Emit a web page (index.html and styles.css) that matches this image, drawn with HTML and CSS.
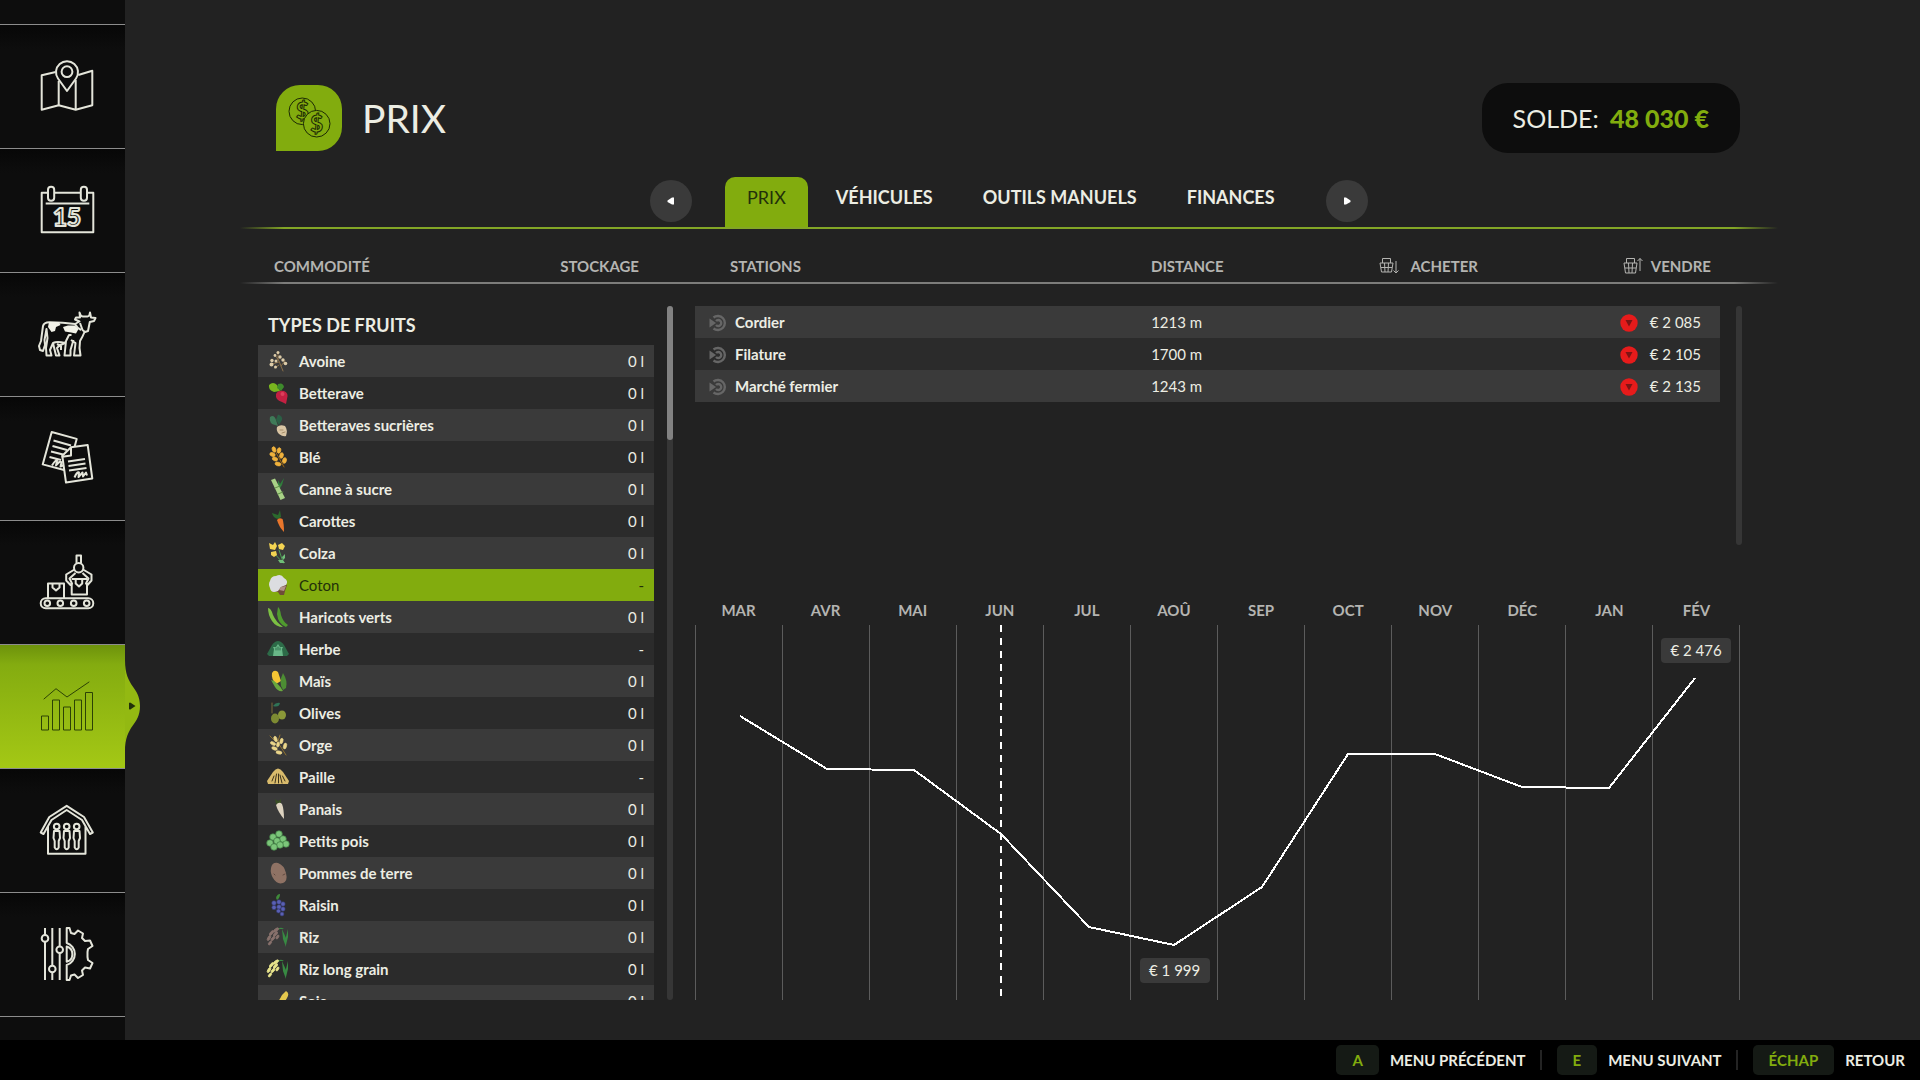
FILE: index.html
```html
<!DOCTYPE html>
<html lang="fr">
<head>
<meta charset="utf-8">
<title>Prix</title>
<link rel="stylesheet" href="styles.css">
</head>
<body>
<div class="app">
  <nav class="sidebar">
    <a class="side-item" href="#carte" aria-label="Carte"><svg class="side-icon" viewBox="0 0 60 60"><path d="M18.700 16L4.700 19.300V53.700L21.700 49.200L38.700 53.700L55.300 49.200V14.800L41.300 19"/><path d="M21.700 25V49.200M38.700 24V53.700"/><path class="solid" d="M30 35L21 22.500A11 11 0 1 1 39 22.500Z"/><circle cx="30" cy="15.700" r="5.400"/></svg></a>
    <a class="side-item" href="#calendrier" aria-label="Calendrier"><svg class="side-icon" viewBox="0 0 60 60"><path d="M4.700 12.700H56.300V52.300H4.700ZM8.700 23.400H52.300"/><rect class="solid" x="11" y="6.800" width="6.200" height="14" rx="3"/><rect class="solid" x="43.800" y="6.800" width="6.200" height="14" rx="3"/><text class="solid side-num" x="30" y="45.500" text-anchor="middle">15</text></svg></a>
    <a class="side-item" href="#animaux" aria-label="Animaux"><svg class="side-icon" viewBox="0 0 60 60"><path d="M38 20Q26 18.400 13 18.200Q7 18 6 22L4 37L2 42L3 46L6 47L8 41L7.500 36L9.500 25L10.500 34L9 44L9.500 51.500H14.500L13 46L16 39L19 51.500H22.500L20 44L23 41Q28 40 29 37L27.500 51.500H33.500V46L36.500 36M29 37L32 31L34.500 31M34 36L38.500 39L37 51.500H43.500L42.500 44L43 37Q46 32 47.500 28M20 40L24 42V46M16 39Q20 37 28 39"/><path d="M38 20L42.500 17.500L38 15.500L39 13.500L43 13.500L42.500 8.500Q43.500 12.500 46 12.500H50.500Q52.500 12.500 53 8.500L54 13.500L58.500 14L57 17L52.800 18L51 27L48 28L45.500 26L43 19M38 20Q40 24 44 26"/><path class="fill" d="M12 18H22L23.500 21L19 23L18 27L14.500 28L11 23ZM26 23L31 21.500H38L41.500 25L39 29.500L34 28.500L28 27.500Z"/></svg></a>
    <a class="side-item" href="#contrats" aria-label="Contrats"><svg class="side-icon" viewBox="0 0 60 60"><path d="M14.700 4L39.700 10.900L37.500 19L25.500 28L28 42.200L5.700 36.400Z"/><path d="M16.500 12.500L34 17.500M15.500 18L30 22M14 23.500L26 26.500M12.500 29L24 32M15 37.500Q19 31 20 33L19 37.500Q23 32 24.500 34.500L23.500 38.500L27 37"/><path class="solid" d="M34 19.200L50.700 17.100L55.300 50.500L29 54.600L25.300 27.800Z"/><path d="M34 19.200V27.500L25.300 28.800M31 33.500L48 31M31.500 38L48.500 35.500M32 42.500L49.500 40M37.500 49.500Q40 43.500 42 44.500L41.500 49L45.500 44.500L46 48.500L49 44.500L50 47.500"/></svg></a>
    <a class="side-item" href="#productions" aria-label="Productions"><svg class="side-icon" viewBox="0 0 60 60"><rect x="3.700" y="46.300" width="52.600" height="10" rx="5"/><circle cx="10.300" cy="51.300" r="2.800"/><circle cx="23.300" cy="51.300" r="2.800"/><circle cx="36.700" cy="51.300" r="2.800"/><circle cx="49.700" cy="51.300" r="2.800"/><path d="M11 46V31.500H27V46M15.500 31.500V35.500L19 38.500L22.500 35.500V31.500"/><path d="M34.700 31V42.500H50V31M34.700 27H50M38.700 27V31.500L42 34.500L45.200 31.500V27"/><path d="M39.500 11V3.500H44V11M37.500 17.500L29.200 22.500V28.500L33.500 33L35 31.500L32.500 26.500L38.500 21M46 17.500L54.500 22.500V28.500L50.500 33L49 31.500L51.500 26.500L45.500 21"/><circle class="solid" cx="41.700" cy="15.700" r="4.700"/></svg></a>
    <a class="side-item active" href="#prix" aria-label="Prix" aria-current="page"><svg class="side-icon thin" viewBox="0 0 60 60"><path d="M4.500 40H11.500V54H4.500ZM15.500 24H22.500V54H15.500ZM26.500 31H33.500V54H26.500ZM37.500 24H44.500V54H37.500ZM48.500 16.500H55.500V54H48.500ZM6.700 23.200L19 12.700L30 21L52.300 5.800"/></svg><svg class="side-notch" viewBox="0 0 16 92"><path class="notch" d="M0 0C0 28 15 26 15 46C15 66 0 64 0 92Z"/><path class="notch-arrow" d="M4 43Q5 42 6 43L10.500 46L6 49Q5 50 4 49Z"/></svg></a>
    <a class="side-item" href="#ferme" aria-label="Ferme"><svg class="side-icon" viewBox="0 0 60 60"><path d="M29.700 5.800L12.300 17L3.700 32.500L6.500 34L14.500 20L29.700 10L45 20L53 34L55.800 32.500L47 17ZM11 26.500V53.700H48.500V26.500"/><circle cx="19.700" cy="26.500" r="2.800"/><circle cx="29.700" cy="26.500" r="2.800"/><circle cx="39.700" cy="26.500" r="2.800"/><path d="M17 31H22.500L23 38L21.700 41V47.500Q19.700 51 17.700 47.500V41L16.500 38ZM27 31H32.500L33 38L31.700 41V47.500Q29.700 51 27.700 47.500V41L26.500 38ZM37 31H42.500L43 38L41.700 41V47.500Q39.700 51 37.700 47.500V41L36.500 38Z"/></svg></a>
    <a class="side-item" href="#reglages" aria-label="Réglages"><svg class="side-icon" viewBox="0 0 60 60"><path d="M8 4V56M15.300 4V56M22.700 4V56"/><circle class="solid" cx="8" cy="14.400" r="3.300"/><circle class="solid" cx="15.300" cy="45" r="3.300"/><circle class="solid" cx="22.700" cy="25.700" r="3.300"/><path d="M29.700 4H32.500L34 9L37.500 10L41 6.500L46 9.500L45 14L48 17L53 16.500L55.500 22L51 25L50.500 28L50.500 33L51 36L55.500 39L53 44.500L48 43.500L45 46.500L46 51L41 54L37.500 50.500L34 51.500L32.500 56H29.700V41A11.500 11.500 0 0 0 29.700 19ZM29.700 22.500A8 8 0 0 1 29.700 37.800V22.500Z"/></svg></a>
  </nav>

  <main class="main">
    <header class="head">
      <div class="badge"><svg viewBox="0 0 66 66"><circle cx="26.300" cy="26.300" r="13.300"/><text x="26.300" y="34" text-anchor="middle">$</text><circle cx="40.700" cy="38.700" r="13.300"/><text x="40.700" y="46.500" text-anchor="middle">$</text></svg></div>
      <h1 class="title">PRIX</h1>
      <p class="balance">SOLDE: <strong>48 030 €</strong></p>
    </header>

    <div class="tabs">
      <button class="round" type="button" aria-label="Onglet précédent"><svg viewBox="0 0 8 8"><path d="M7 .5V7.500H5L.5 5V3.500L5 .5Z"/></svg></button>
      <div class="tab-list">
        <button class="tab current" type="button">PRIX</button>
        <button class="tab" type="button">VÉHICULES</button>
        <button class="tab" type="button">OUTILS MANUELS</button>
        <button class="tab" type="button">FINANCES</button>
      </div>
      <button class="round" type="button" aria-label="Onglet suivant"><svg viewBox="0 0 8 8"><path d="M1 .5V7.500H3L7.500 5V3.500L3 .5Z"/></svg></button>
    </div>
    <div class="rule green"></div>

    <div class="cols">
      <div class="cols-left"><span>COMMODITÉ</span><span>STOCKAGE</span></div>
      <div class="cols-right">
        <span class="c-station">STATIONS</span><span>DISTANCE</span>
        <span class="c-end"><svg class="basket" viewBox="0 0 20 18"><path d="M1 6H14L12.500 15H2.500ZM3.500 6V1.500H11.500V6M2 10.500H13M5.500 6L6 15M9.500 6L9 15M17 4V16M14.500 13.500L17 16L19.500 13.500"/></svg>ACHETER</span>
        <span class="c-end c-sell"><svg class="basket" viewBox="0 0 20 18"><path d="M1 6H14L12.500 16H2.500ZM3.500 6V1.500H11.500V6M2 11H13M5.500 6L6 16M9.500 6L9 16M17 14V1.500M14.500 4L17 1.500L19.500 4"/></svg>VENDRE</span>
      </div>
    </div>
    <div class="rule grey"></div>

    <div class="body">
      <section class="fruits">
        <div class="fruit-list">
          <h2 class="group">TYPES DE FRUITS</h2>
          <table class="rows">
            <tr><td class="ico"><svg viewBox="0 0 24 24"><path class="st" stroke="#8a6f48" d="M17 22L13 12L9 6M12 11L12 4M13 13L6 15M15 17L19 12M13 16L9 19"/><g fill="#dccba8"><circle cx="12" cy="3.500" r="1.500"/><circle cx="9" cy="6.500" r="1.400"/><circle cx="14" cy="8" r="1.700"/><circle cx="6" cy="11.500" r="1.700"/><circle cx="10" cy="12" r="1.500"/><circle cx="5.500" cy="15.500" r="2"/><circle cx="17" cy="11" r="1.700"/><circle cx="19.500" cy="14.500" r="1.800"/><circle cx="9.500" cy="18" r="1.500"/></g></svg></td><td class="name">Avoine</td><td class="qty">0 l</td></tr>
            <tr><td class="ico"><svg viewBox="0 0 24 24"><path fill="#79b51f" d="M3 4Q7 0 11 4L14 10L8 11Q2 9 3 4Z"/><path fill="#3e8a2c" d="M12 3Q17 1 18 6L15 10L11 7Z"/><path fill="#c32042" d="M10 13Q12 9 18 10Q23 12 21 18L20 23L16 21Q9 19 10 13Z"/><circle cx="16.500" cy="13" r="2" fill="#dc3f5c"/></svg></td><td class="name">Betterave</td><td class="qty">0 l</td></tr>
            <tr><td class="ico"><svg viewBox="0 0 24 24"><path fill="#3f7a58" d="M4 4Q8 1 10 7L12 13L6 11Q3 8 4 4Z"/><path fill="#2b5f45" d="M12 1.500Q17 3 16 7L13 12L10 7Z"/><path fill="#d9c5a4" d="M11 14Q14 11 19 13Q22 17 20 23Q17 24 13 21Q10 18 11 14Z"/><path class="st" stroke="#a58d6a" d="M14 17H17M16 20L19 19"/></svg></td><td class="name">Betteraves sucrières</td><td class="qty">0 l</td></tr>
            <tr><td class="ico"><svg viewBox="0 0 24 24"><path class="st" stroke="#9a6412" d="M18 22L8 4"/><g fill="#f0b23c" stroke="#f0b23c" stroke-width=".7"><ellipse cx="8" cy="4.500" rx="1.800" ry="2.800" transform="rotate(-20 8 4.500)"/><ellipse cx="13" cy="5.500" rx="1.800" ry="2.800" transform="rotate(15 13 5.500)"/><ellipse cx="6.500" cy="9.500" rx="2.800" ry="1.800" transform="rotate(20 6.500 9.500)"/><ellipse cx="15.500" cy="10.500" rx="1.800" ry="2.800" transform="rotate(15 15.500 10.500)"/><ellipse cx="9" cy="14" rx="2.800" ry="1.800" transform="rotate(20 9 14)"/><ellipse cx="18.500" cy="15.500" rx="1.900" ry="2.900" transform="rotate(15 18.500 15.500)"/><ellipse cx="12" cy="19" rx="3" ry="1.800" transform="rotate(15 12 19)"/></g></svg></td><td class="name">Blé</td><td class="qty">0 l</td></tr>
            <tr><td class="ico"><svg viewBox="0 0 24 24"><path fill="#2f7d3c" d="M12 11L12 3L14 7L18 1L16 8L13 13Z"/><path fill="#a9d287" d="M5 3L9 1.500L19 21L14.500 23Z"/><path class="st" stroke="#5f9147" d="M9 11L14 9M12 17L17 15"/></svg></td><td class="name">Canne à sucre</td><td class="qty">0 l</td></tr>
            <tr><td class="ico"><svg viewBox="0 0 24 24"><path fill="#2b6a2d" d="M6 4L12 6L14 1L15 8L12 10Q7 9 6 4Z"/><path fill="#e8762c" d="M11 11Q13 8 16.500 10Q18 14 18 23Q13 18 11 11Z"/></svg></td><td class="name">Carottes</td><td class="qty">0 l</td></tr>
            <tr><td class="ico"><svg viewBox="0 0 24 24"><path class="st" stroke="#4c9a55" d="M8 12L17 22M13 9L17 21"/><path fill="#f4d452" d="M3 2L7 4L9 1L11 5L9 9L4 8ZM12 4L16 2L19 5L17 9L13 8ZM5 11L10 10L11 14L8 16L5 14Z"/><path fill="#6fbe77" d="M16 16L19 13L19 17L17 19ZM12 19L17 19L19 22L14 22Z"/></svg></td><td class="name">Colza</td><td class="qty">0 l</td></tr>
            <tr class="selected"><td class="ico"><svg viewBox="0 0 24 24"><path fill="#6f4d38" d="M8 16L15 10L21 12L19 18L18 22H14L12 19L6 19Z"/><path fill="#dcdde0" d="M4 8Q5 3 10 3Q15 0 18 5Q23 8 20 12L15 14L12 18Q5 21 4 15Q2 11 4 8Z"/><path fill="#b2928a" d="M13 17L15 14L20 13L18 18Z"/></svg></td><td class="name">Coton</td><td class="qty">-</td></tr>
            <tr><td class="ico"><svg viewBox="0 0 24 24"><path fill="#7cc043" d="M2 3Q5 3 7 10Q10 17 17 22Q10 22 6 16Q2 10 2 3Z"/><path fill="#4f9b2e" d="M12 2Q14 3 15 10Q17 17 22 20L20 22Q12 19 11 9Z"/></svg></td><td class="name">Haricots verts</td><td class="qty">0 l</td></tr>
            <tr><td class="ico"><svg viewBox="0 0 24 24"><path fill="#2d6b48" d="M1 17L6 8Q12 0 18 8L23 17L21 19H3Z"/><path fill="#69b888" d="M7 19L8 12L7 10L10 10L12 7L14 10L17 10L16 12L17 19Z"/><path class="st" stroke="#2d6b48" d="M10 11V13M14 11V13M12 10V13"/></svg></td><td class="name">Herbe</td><td class="qty">-</td></tr>
            <tr><td class="ico"><svg viewBox="0 0 24 24"><path fill="#f6c534" d="M6 4Q8 0 12 3L15 12L10 15Q5 10 6 4Z"/><path fill="#69a83e" d="M5 11Q11 12 17 22Q12 23 9 18Z"/><path fill="#4c8d33" d="M17 4Q22 12 20 19L17 21Q12 14 17 4Z"/></svg></td><td class="name">Maïs</td><td class="qty">0 l</td></tr>
            <tr><td class="ico"><svg viewBox="0 0 24 24"><path class="st" stroke="#7a6a3a" d="M6 2V12"/><path fill="#2f7356" d="M7 5Q10 1 14 2Q13 7 7 5Z"/><ellipse cx="9" cy="17.500" rx="4" ry="5" fill="#7d8a32"/><ellipse cx="16" cy="14" rx="4" ry="4.500" fill="#8a9838"/></svg></td><td class="name">Olives</td><td class="qty">0 l</td></tr>
            <tr><td class="ico"><svg viewBox="0 0 24 24"><path class="st" stroke="#8f7230" d="M20 22L9 5M14 2L12 8M4 3L8 7"/><g fill="#ead58a" stroke="#ead58a" stroke-width=".6"><ellipse cx="9.500" cy="6" rx="1.500" ry="2.800" transform="rotate(-20 9.500 6)"/><ellipse cx="15.500" cy="8" rx="1.500" ry="2.800" transform="rotate(15 15.500 8)"/><ellipse cx="7" cy="10.500" rx="2.800" ry="1.500" transform="rotate(25 7 10.500)"/><ellipse cx="12" cy="11.500" rx="1.400" ry="2.600" transform="rotate(10 12 11.500)"/><ellipse cx="8.500" cy="15.500" rx="2.900" ry="1.500" transform="rotate(20 8.500 15.500)"/><ellipse cx="19" cy="13" rx="1.600" ry="3" transform="rotate(15 19 13)"/><ellipse cx="13" cy="19.500" rx="3" ry="1.600" transform="rotate(10 13 19.500)"/></g></svg></td><td class="name">Orge</td><td class="qty">0 l</td></tr>
            <tr><td class="ico"><svg viewBox="0 0 24 24"><path fill="#d9bb6c" d="M1 16L7 7Q12 0 17 7L23 16L22 19H2Z"/><path class="st" stroke="#3d331c" d="M8 11L6 16M10.500 9L9 18M12.500 9V18M14 10L16 18M16.500 11L19 16"/></svg></td><td class="name">Paille</td><td class="qty">-</td></tr>
            <tr><td class="ico"><svg viewBox="0 0 24 24"><path fill="#394d25" d="M9 2L12 4L15 2L15 7H10Z"/><path fill="#ddd3c0" d="M10 8Q13 4 16 7Q18 12 18 22Q12 15 10 8Z"/></svg></td><td class="name">Panais</td><td class="qty">0 l</td></tr>
            <tr><td class="ico"><svg viewBox="0 0 24 24"><g fill="#7cc57a" stroke="#3f8044" stroke-width=".7"><circle cx="13" cy="5" r="3.300"/><circle cx="7" cy="8" r="3.300"/><circle cx="4" cy="14" r="3.300"/><circle cx="17" cy="10" r="3.300"/><circle cx="11" cy="12" r="3.300"/><circle cx="20" cy="15" r="3.300"/><circle cx="14" cy="16" r="3.300"/><circle cx="8" cy="18" r="3.300"/></g></svg></td><td class="name">Petits pois</td><td class="qty">0 l</td></tr>
            <tr><td class="ico"><svg viewBox="0 0 24 24"><path fill="#8f7264" d="M5 7Q6 1 12 2Q18 4 20 12Q22 20 17 22Q11 24 7 17Q4 12 5 7Z"/><path class="st" stroke="#614a40" d="M17 14L19 13M8 13L9 14"/></svg></td><td class="name">Pommes de terre</td><td class="qty">0 l</td></tr>
            <tr><td class="ico"><svg viewBox="0 0 24 24"><path fill="#3f8a3a" d="M10 5Q11 1 14 1Q14 5 11 7Z"/><g fill="#5a60b4" stroke="#33376f" stroke-width=".6"><circle cx="8" cy="10" r="2.300"/><circle cx="13" cy="9" r="2.300"/><circle cx="17" cy="11" r="2.200"/><circle cx="8" cy="14.500" r="2.200"/><circle cx="13" cy="14" r="2.300"/><circle cx="17" cy="16" r="2.200"/><circle cx="12.500" cy="18" r="2.100"/><circle cx="16" cy="21" r="2"/></g></svg></td><td class="name">Raisin</td><td class="qty">0 l</td></tr>
            <tr><td class="ico"><svg viewBox="0 0 24 24"><path fill="#388a43" d="M16 4L20 13L20 22L17 14ZM22 4V12L20 20L20 12ZM11 5Q14 1 18 4L14 4Z"/><g fill="#88716c" stroke="#88716c" stroke-width=".8"><ellipse cx="10" cy="5" rx="3" ry="1.300" transform="rotate(-35 10 5)"/><ellipse cx="5.500" cy="8" rx="2.800" ry="1.300" transform="rotate(-50 5.500 8)"/><ellipse cx="9.500" cy="9" rx="2.800" ry="1.300" transform="rotate(-50 9.500 9)"/><ellipse cx="3" cy="13" rx="2.800" ry="1.200" transform="rotate(-60 3 13)"/><ellipse cx="7" cy="13.500" rx="2.600" ry="1.200" transform="rotate(-50 7 13.500)"/><ellipse cx="11.500" cy="12" rx="2.200" ry="1.100" transform="rotate(-60 11.500 12)"/><ellipse cx="4" cy="18" rx="2.200" ry="1.100" transform="rotate(-50 4 18)"/></g></svg></td><td class="name">Riz</td><td class="qty">0 l</td></tr>
            <tr><td class="ico"><svg viewBox="0 0 24 24"><path fill="#388a43" d="M16 4L20 13L20 22L17 14ZM22 4V12L20 20L20 12ZM11 5Q14 1 18 4L14 4Z"/><g fill="#e8e48c" stroke="#e8e48c" stroke-width=".8"><ellipse cx="10" cy="5" rx="3" ry="1.300" transform="rotate(-35 10 5)"/><ellipse cx="5.500" cy="8" rx="2.800" ry="1.300" transform="rotate(-50 5.500 8)"/><ellipse cx="9.500" cy="9" rx="2.800" ry="1.300" transform="rotate(-50 9.500 9)"/><ellipse cx="3" cy="13" rx="2.800" ry="1.200" transform="rotate(-60 3 13)"/><ellipse cx="7" cy="13.500" rx="2.600" ry="1.200" transform="rotate(-50 7 13.500)"/><ellipse cx="11.500" cy="12" rx="2.200" ry="1.100" transform="rotate(-60 11.500 12)"/><ellipse cx="4" cy="18" rx="2.200" ry="1.100" transform="rotate(-50 4 18)"/></g></svg></td><td class="name">Riz long grain</td><td class="qty">0 l</td></tr>
            <tr><td class="ico"><svg viewBox="0 0 24 24"><path fill="#e6c94e" d="M20 2Q24 4 21 9Q16 18 6 20Q12 14 16 6Z"/></svg></td><td class="name">Soja</td><td class="qty">0 l</td></tr>
          </table>
        </div>
        <div class="scroll"><div class="thumb"></div></div>
      </section>

      <section class="details">
        <div class="stations">
          <div class="station-list">
            <table class="rows station-rows">
              <colgroup><col class="w-name"><col class="w-dist"><col class="w-buy"><col class="w-sell"></colgroup>
              <tr><td class="name"><svg class="target" viewBox="0 0 18 18"><path d="M4.500 3.500A7 7 0 1 1 4.500 14.500M7 7A3 3 0 1 1 7 11"/><path class="tip" d="M.5 4.500L7 9L.5 13.500Z"/></svg>Cordier</td><td>1213 m</td><td></td><td class="price"><svg class="down" viewBox="0 0 18 18"><circle cx="9" cy="9" r="8.700"/><path d="M5.500 6H12.500L9 12.500Z"/></svg>€ 2 085</td></tr>
              <tr><td class="name"><svg class="target" viewBox="0 0 18 18"><path d="M4.500 3.500A7 7 0 1 1 4.500 14.500M7 7A3 3 0 1 1 7 11"/><path class="tip" d="M.5 4.500L7 9L.5 13.500Z"/></svg>Filature</td><td>1700 m</td><td></td><td class="price"><svg class="down" viewBox="0 0 18 18"><circle cx="9" cy="9" r="8.700"/><path d="M5.500 6H12.500L9 12.500Z"/></svg>€ 2 105</td></tr>
              <tr><td class="name"><svg class="target" viewBox="0 0 18 18"><path d="M4.500 3.500A7 7 0 1 1 4.500 14.500M7 7A3 3 0 1 1 7 11"/><path class="tip" d="M.5 4.500L7 9L.5 13.500Z"/></svg>Marché fermier</td><td>1243 m</td><td></td><td class="price"><svg class="down" viewBox="0 0 18 18"><circle cx="9" cy="9" r="8.700"/><path d="M5.500 6H12.500L9 12.500Z"/></svg>€ 2 135</td></tr>
            </table>
          </div>
          <div class="scroll"></div>
        </div>

        <div class="months"><span>MAR</span><span>AVR</span><span>MAI</span><span>JUN</span><span>JUL</span><span>AOÛ</span><span>SEP</span><span>OCT</span><span>NOV</span><span>DÉC</span><span>JAN</span><span>FÉV</span></div>
        <div class="chart">
          <div class="bands"><i></i><i></i><i></i><i></i><i></i><i></i><i></i><i></i><i></i><i></i><i></i><i></i></div>
          <svg class="plot" viewBox="0 0 1045 375" preserveAspectRatio="none">
            <path class="now" d="M306 0V373"/>
            <polyline class="curve" points="45,91 132,144 219,145 306,209 394,302 479,320 567,262 653,129 740,129 827,162 914,163 1000,53"/>
          </svg>
          <span class="tag low">€ 1 999</span>
          <span class="tag high">€ 2 476</span>
        </div>
      </section>
    </div>
  </main>
</div>

<footer class="footer">
  <button class="hint" type="button"><kbd>A</kbd>MENU PRÉCÉDENT</button>
  <button class="hint" type="button"><kbd>E</kbd>MENU SUIVANT</button>
  <button class="hint" type="button"><kbd>ÉCHAP</kbd>RETOUR</button>
</footer>
</body>
</html>
```
FILE: styles.css
```css
:root {
  --bg: #222222;
  --dark: #0d0d0d;
  --green: #82ac0e;
  --cream: #ecede3;
  --muted: #b4b4b1;
  --row: #3a3a3a;
  --row-alt: #2b2b2b;
}

* { box-sizing: border-box; }

body {
  margin: 0;
  height: 100vh;
  display: flex;
  flex-direction: column;
  overflow: hidden;
  background: var(--bg);
  color: var(--cream);
  font-family: Lato, "Open Sans", sans-serif;
  font-size: 15px;
}

h1, h2, p { margin: 0; font-weight: 400; }
button { border: 0; padding: 0; background: none; color: inherit; font: inherit; }

.app { flex: 1; min-height: 0; display: flex; }

/* Sidebar */
.sidebar {
  flex: none;
  width: 125px;
  display: flex;
  flex-direction: column;
  justify-content: center;
  background: var(--dark);
}
.side-item {
  flex: none;
  position: relative;
  height: 124px;
  padding-left: 37px;
  display: flex;
  align-items: center;
  border-top: 1px solid #8c8c8c;
  background: linear-gradient(#070707, var(--dark) 24px);
}
.side-item:last-child { height: 125px; border-bottom: 1px solid #8c8c8c; }
.side-icon {
  width: 60px;
  height: 60px;
  fill: none;
  stroke: #e4e5da;
  stroke-width: 2;
  stroke-linejoin: round;
}
.side-icon .solid { fill: var(--dark); }
.side-icon .fill { fill: #f2f2e8; stroke: none; }
.side-icon.thin { stroke: #2c4205; stroke-width: 1; stroke-linejoin: miter; }
.side-num { font-size: 24px; font-weight: 900; }
.side-item.active { background: linear-gradient(#6d920c, #84ac10 16%, #a4c815); }
.side-notch { position: absolute; left: 100%; top: 15px; width: 16px; height: 92px; }
.notch { fill: #93b912; }
.notch-arrow { fill: #22300a; }

/* Header */
.main {
  flex: 1;
  min-width: 0;
  display: flex;
  flex-direction: column;
  padding: 83px 142px 40px 115px;
}
.head {
  display: flex;
  align-items: center;
  height: 70px;
  padding: 0 38px 0 36px;
}
.badge {
  width: 66px;
  height: 66px;
  border-radius: 24px 24px 24px 0;
  background: var(--green);
}
.badge svg { display: block; fill: var(--green); stroke: #1d2a05; stroke-width: 1; }
.badge text { font-size: 22px; font-weight: 900; }
.title { margin-left: 20px; font-size: 39px; }
.balance {
  margin-left: auto;
  height: 70px;
  padding: 0 31px;
  border-radius: 26px;
  background: var(--dark);
  font-size: 25px;
  line-height: 70px;
}
.balance strong { margin-left: 5px; color: var(--green); font-weight: 900; }

/* Tabs */
.tabs {
  display: flex;
  justify-content: center;
  align-items: flex-end;
  gap: 33px;
  padding-top: 24px;
}
.round {
  width: 42px;
  height: 42px;
  margin-bottom: 5px;
  border-radius: 50%;
  background: #3a3a3a;
  display: grid;
  place-items: center;
}
.round svg { width: 8px; height: 8px; fill: #fff; }
.tab-list { display: flex; gap: 6px; width: 568px; }
.tab {
  height: 50px;
  padding: 0 22px 10px;
  border-radius: 10px 10px 0 0;
  font-size: 18px;
  font-weight: 700;
  white-space: nowrap;
}
.tab.current { background: var(--green); color: #22300a; font-weight: 400; }
.rule { flex: none; height: 2px; }
.rule.green { background: linear-gradient(90deg, transparent, #83a626 44px, #83a626 calc(100% - 44px), transparent); }
.rule.grey { background: linear-gradient(90deg, transparent, #7d7d7b 44px, #7d7d7b calc(100% - 44px), transparent); }

/* Column titles */
.cols {
  display: grid;
  grid-template-columns: 437px 1fr;
  height: 53px;
  padding: 22px 36px 0 18px;
  line-height: 30px;
  font-weight: 700;
  color: var(--muted);
}
.cols-left { display: flex; justify-content: space-between; padding: 0 56px 0 16px; }
.cols-right {
  display: grid;
  grid-template-columns: 456fr 171fr 156fr 242fr;
  margin-right: 22px;
}
.c-station { padding-left: 35px; }
.c-end { display: flex; justify-content: flex-end; align-items: center; gap: 12px; height: 30px; }
.c-sell { padding-right: 9px; gap: 8px; }
.basket { width: 20px; height: 18px; fill: none; stroke: var(--muted); stroke-width: 1; }

/* Body */
.body {
  flex: 1;
  min-height: 0;
  display: grid;
  grid-template-columns: 415px 1fr;
  grid-template-rows: 100%;
  gap: 22px;
  padding: 22px 36px 0 18px;
}
.fruits { display: flex; justify-content: space-between; min-height: 0; }
.fruit-list { width: 396px; overflow: hidden; }
.group { height: 39px; padding-left: 10px; font-size: 18px; line-height: 39px; font-weight: 700; }
.scroll { width: 6px; border-radius: 3px; background: #363636; }
.thumb { height: 134px; border-radius: 3px; background: #828282; }

.rows { width: 100%; border-collapse: collapse; }
.rows td { height: 32px; padding: 0; }
.rows tr { background: var(--row-alt); }
.rows tr:nth-child(odd) { background: var(--row); }
.rows .name { font-weight: 700; }
.ico { width: 41px; }
.ico svg { display: block; width: 24px; height: 24px; margin-left: 8px; }
.ico .st { fill: none; stroke-linecap: round; }
.rows .qty { padding-right: 10px; text-align: right; }
.rows .selected { background: var(--green); color: #22300a; }
.rows .selected .name { font-weight: 400; }

.details { display: flex; flex-direction: column; min-width: 0; }
.stations { flex: none; display: flex; height: 239px; }
.station-list { flex: 1; margin-right: 16px; }
.station-rows { table-layout: fixed; }
.w-name { width: 44.5%; }
.w-dist { width: 17%; }
.w-buy { width: 15%; }
.rows .price { padding-right: 19px; text-align: right; }
.target {
  width: 18px;
  height: 18px;
  margin: 0 8px 0 14px;
  vertical-align: -4px;
  fill: none;
  stroke: #666;
  stroke-width: 2.4;
}
.target .tip { fill: #666; stroke: none; }
.down { width: 18px; height: 18px; margin-right: 12px; vertical-align: -4px; fill: #e61b1b; }
.down path { fill: #7c1414; }

/* Chart */
.months {
  display: grid;
  grid-template-columns: repeat(12, 1fr);
  margin: 50px 2px 0 0;
  height: 30px;
  line-height: 30px;
  text-align: center;
  font-weight: 700;
  color: var(--muted);
}
.chart { position: relative; flex: 1; min-height: 0; margin-right: 2px; }
.bands {
  display: grid;
  grid-template-columns: repeat(12, 1fr);
  height: 100%;
  border-right: 1px solid #5c5c5c;
}
.bands i { border-left: 1px solid #5c5c5c; }
.plot { position: absolute; inset: 0; width: 100%; height: 100%; overflow: visible; }
.plot * {
  fill: none;
  stroke: #fff;
  stroke-width: 2;
  vector-effect: non-scaling-stroke;
  shape-rendering: crispEdges;
}
.plot .now { stroke-dasharray: 7 6; }
.tag {
  position: absolute;
  width: 70px;
  height: 25px;
  margin-left: -35px;
  border-radius: 4px;
  background: #3a3a3a;
  text-align: center;
  line-height: 25px;
}
.low { left: 45.9%; top: 88.8%; }
.high { left: 95.8%; top: 3.5%; }

/* Footer */
.footer {
  flex: none;
  height: 40px;
  display: flex;
  justify-content: flex-end;
  align-items: center;
  padding-right: 15px;
  background: #000;
  font-weight: 700;
}
.hint { display: flex; align-items: center; gap: 11px; }
.hint + .hint::before {
  content: "";
  width: 2px;
  height: 20px;
  margin: 0 4px 0 14px;
  background: #242424;
}
kbd {
  height: 30px;
  padding: 0 16px;
  border-radius: 5px;
  background: #151a15;
  color: var(--green);
  font: inherit;
  line-height: 30px;
}
```
